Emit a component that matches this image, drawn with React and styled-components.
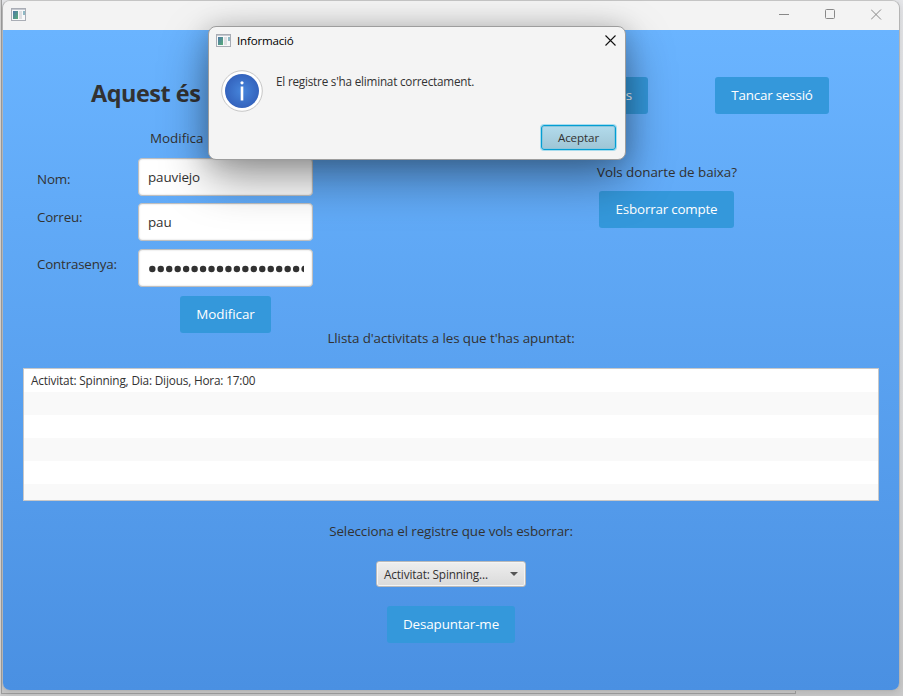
import React from "react";
import styled, { createGlobalStyle } from "styled-components";

const GlobalStyle = createGlobalStyle`
  * { box-sizing: border-box; }
  body {
    margin: 0;
    font-family: "Open Sans", "Noto Sans", sans-serif;
    color: #323232;
    overflow: hidden;
  }
  button, input { font-family: inherit; color: inherit; }
`;

const Desktop = styled.div`
  position: relative;
  width: 903px;
  height: 696px;
  padding-left: 2px;
  overflow: hidden;
  background: linear-gradient(#e6e7ea, #dcdddf 60%, #cacaca);
  border-left: 1px solid #cfcfcf;
`;

const BackWindow = styled.div`
  position: absolute;
  left: 0;
  bottom: 2px;
  width: 795px;
  height: 694px;
  border: solid #a0a0a0;
  border-width: 0 1px 1px 1px;
`;

const Window = styled.div`
  position: relative;
  width: 898px;
  height: 691px;
  margin-left: -1px;
  border: 1px solid #b4b4b4;
  border-top-color: #c4c4c4;
  border-radius: 8px;
  overflow: hidden;
  box-shadow: 0 2px 8px rgba(0, 0, 0, 0.12);
`;

const TitleBar = styled.header`
  display: flex;
  align-items: center;
  justify-content: space-between;
  height: 29px;
  padding: 0 17px 3px 8px;
  background: #f3f3f3;
`;

const WindowControls = styled.div`
  display: flex;
  gap: 35px;
  svg { display: block; }
`;

const Content = styled.main`
  display: flex;
  flex-direction: column;
  align-items: center;
  height: 660px;
  background: linear-gradient(#6ab4ff, #4a90e2);
`;

const TopArea = styled.section`
  display: flex;
  align-self: stretch;
  height: 298px;
`;

const ProfileColumn = styled.div`
  width: 531px;
  padding: 46px 0 0 34px;
`;

const AccountColumn = styled.div`
  padding-top: 47px;
`;

const Heading = styled.h1`
  margin: 0 0 18px 54px;
  font-size: 23.4px;
  line-height: 34px;
  font-weight: 700;
  letter-spacing: ${(p) => p.$track}px;
`;

const Label = styled.div`
  font-size: 13.4px;
  line-height: 20px;
  white-space: nowrap;
  letter-spacing: ${(p) => p.$track ?? -0.2}px;
  margin: ${(p) => p.$margin || "0"};
`;

const Form = styled.div`
  display: grid;
  grid-template-columns: 101px 175px;
`;

const Fields = styled.div`
  display: grid;
  grid-template-rows: 45px 46px 38px;
`;

const Input = styled.input`
  width: 175px;
  height: 38px;
  padding: 0 9px;
  border: 1px solid #bfbfbf;
  border-radius: 4px;
  background: #fff;
  box-shadow: inset 0 0 2px rgba(0, 0, 0, 0.2);
  font-size: 13.4px;
  letter-spacing: -0.1px;
  outline: none;
`;

const PasswordBox = styled.div`
  width: 175px;
  height: 38px;
  padding: 0 8px 0 10px;
  border: 1px solid #bfbfbf;
  border-radius: 4px;
  background: #fff;
  box-shadow: inset 0 0 2px rgba(0, 0, 0, 0.2);
  svg { display: block; width: 155px; height: 36px; }
`;

const ActionButton = styled.button`
  display: block;
  flex: none;
  width: ${(p) => p.$width}px;
  height: 37px;
  margin: ${(p) => p.$margin || "0"};
  padding: 0 16px 1px;
  border: 0;
  border-radius: 3px;
  background: #3498db;
  color: #fff;
  font-size: 13.4px;
  white-space: nowrap;
  text-align: ${(p) => p.$align || "center"};
  letter-spacing: ${(p) => p.$track ?? -0.2}px;
`;

const SessionRow = styled.div`
  display: flex;
  gap: 67px;
`;

const List = styled.ul`
  width: 856px;
  height: 133px;
  margin: 20px 0 0;
  padding: 0;
  border: 1px solid #c8c8c8;
  list-style: none;
  overflow: hidden;
  background: #fff;
`;

const ListRow = styled.li`
  height: 23px;
  padding-left: 7px;
  font-size: 11.8px;
  line-height: 23px;
  letter-spacing: -0.18px;
  background: ${(p) => (p.$alt ? "#f9f9f9" : "#fff")};
`;

const Combo = styled.div`
  display: flex;
  align-items: center;
  justify-content: space-between;
  width: 150px;
  height: 26px;
  margin: 20px 0 19px;
  padding: 0 7px 1px;
  border: 1px solid #bababa;
  border-radius: 3px;
  background: linear-gradient(#eeeeee, #dadada);
  box-shadow: inset 0 0 0 1px #f4f4f4;
  font-size: 11.8px;
  letter-spacing: -0.16px;
`;

const Dialog = styled.div`
  position: absolute;
  left: 207px;
  top: 26px;
  width: 418px;
  height: 134px;
  border: 1px solid #9d9d9d;
  border-radius: 8px;
  background: #f4f4f4;
  box-shadow: 0 18px 48px rgba(0, 0, 0, 0.4), 0 2px 24px rgba(0, 0, 0, 0.17);
`;

const DialogBar = styled.div`
  display: flex;
  align-items: center;
  gap: 6px;
  height: 29px;
  padding: 0 9px 2px 7px;
  color: #000;
  svg:last-child { margin-left: auto; }
`;

const DialogTitle = styled.span`
  font-size: 11.6px;
  letter-spacing: -0.2px;
`;

const DialogBody = styled.div`
  display: flex;
  gap: 13px;
  height: 69px;
  padding: 14px 12px 0;
`;

const Message = styled.p`
  margin: 3px 0 0;
  font-size: 11.7px;
  line-height: 16px;
  letter-spacing: ${(p) => p.$track}px;
`;

const AcceptButton = styled.button`
  display: block;
  width: 75px;
  height: 25px;
  margin: 0 9px 0 auto;
  padding: 0;
  border: 1px solid #039ed3;
  border-radius: 3px;
  background: linear-gradient(#b2dbec, #9fc5d5);
  box-shadow: 0 0 0 1px #a7dcee, inset 0 0 0 1px #8bc6dc;
  font-size: 11.6px;
  letter-spacing: -0.1px;
`;

const AppIcon = () => (
  <svg width="15" height="13" viewBox="0 0 15 13">
    <defs>
      <linearGradient id="pane" x1="0" y1="0" x2="1" y2="1">
        <stop offset="0" stopColor="#4d78a8" />
        <stop offset="1" stopColor="#58ac78" />
      </linearGradient>
    </defs>
    <rect x="0.5" y="0.5" width="14" height="12" fill="#f7f8f9" stroke="#a9adb5" />
    <path d="M1 1.5h13" stroke="#c5c8cf" />
    <rect x="2" y="3" width="5" height="8" fill="url(#pane)" />
    <rect x="8" y="3" width="3" height="8" fill="#dedfe2" />
    <rect x="12" y="3" width="2" height="4" fill="#8fb9c5" />
  </svg>
);

const InfoIcon = () => (
  <svg width="42" height="42" viewBox="0 0 42 42">
    <defs>
      <radialGradient id="info">
        <stop offset="0" stopColor="#4686dc" />
        <stop offset="1" stopColor="#3463bd" />
      </radialGradient>
    </defs>
    <circle cx="21" cy="21" r="20.3" fill="#fff" stroke="#c6c6c6" />
    <circle cx="21" cy="21" r="17" fill="url(#info)" />
    <path d="M21 16.5v14" stroke="#fff" strokeWidth="2.6" />
    <circle cx="21" cy="12.8" r="1.6" fill="#fff" />
  </svg>
);

const PasswordDots = () => (
  <svg viewBox="0 0 155 36">
    {Array.from({ length: 19 }, (_, i) => (
      <circle key={i} cx={3.3 + i * 8.46} cy="19" r="3.2" fill="#323232" />
    ))}
  </svg>
);

export default function App() {
  return (
    <>
      <GlobalStyle />
      <Desktop>
        <BackWindow />
        <Window>
          <TitleBar>
            <AppIcon />
            <WindowControls>
              <svg width="11" height="11" viewBox="0 0 11 11" stroke="#888"><path d="M0 5.5h10" /></svg>
              <svg width="11" height="11" viewBox="0 0 11 11" stroke="#888" fill="none"><rect x="0.5" y="0.5" width="9" height="9" rx="1" /></svg>
              <svg width="11" height="11" viewBox="0 0 11 11" stroke="#888"><path d="M0 0.5l10 10M10 0.5l-10 10" /></svg>
            </WindowControls>
          </TitleBar>
          <Content>
            <TopArea>
              <ProfileColumn>
                <Heading $track={-0.45}>Aquest és</Heading>
                <Label $track={0} $margin="0 0 10px 113px">Modifica</Label>
                <Form>
                  <div>
                    <Label $margin="11px 0 0">Nom:</Label>
                    <Label $margin="18px 0 0">Correu:</Label>
                    <Label $margin="27px 0 0">Contrasenya:</Label>
                  </div>
                  <Fields>
                    <Input defaultValue="pauviejo" />
                    <Input defaultValue="pau" />
                    <PasswordBox><PasswordDots /></PasswordBox>
                  </Fields>
                </Form>
                <ActionButton $width={91} $track={-0.05} $margin="9px 0 0 143px">Modificar</ActionButton>
              </ProfileColumn>
              <AccountColumn>
                <SessionRow>
                  <ActionButton $width={114} $align="right">s</ActionButton>
                  <ActionButton $width={114}>Tancar sessió</ActionButton>
                </SessionRow>
                <Label $track={-0.04} $margin="48px 0 9px 63px">Vols donarte de baixa?</Label>
                <ActionButton $width={135} $margin="0 0 0 65px">Esborrar compte</ActionButton>
              </AccountColumn>
            </TopArea>
            <Label $track={-0.08}>Llista d'activitats a les que t'has apuntat:</Label>
            <List>
              <ListRow>Activitat: Spinning, Dia: Dijous, Hora: 17:00</ListRow>
              <ListRow $alt />
              <ListRow />
              <ListRow $alt />
              <ListRow />
              <ListRow $alt />
            </List>
            <Label $track={-0.1} $margin="20px 0 0">Selecciona el registre que vols esborrar:</Label>
            <Combo>
              <span>Activitat: Spinning...</span>
              <svg width="8" height="4" viewBox="0 0 8 4"><path d="M0 0h8L4 4z" fill="#555" /></svg>
            </Combo>
            <ActionButton $width={128} $track={-0.12}>Desapuntar-me</ActionButton>
          </Content>
        </Window>
        <Dialog>
          <DialogBar>
            <AppIcon />
            <DialogTitle>Informació</DialogTitle>
            <svg width="11" height="11" viewBox="0 0 11 11" stroke="#111" strokeWidth="1.1"><path d="M0.5 0.5l10 10M10.5 0.5l-10 10" /></svg>
          </DialogBar>
          <DialogBody>
            <InfoIcon />
            <Message $track={-0.2}>El registre s'ha eliminat correctament.</Message>
          </DialogBody>
          <AcceptButton>Aceptar</AcceptButton>
        </Dialog>
      </Desktop>
    </>
  );
}
